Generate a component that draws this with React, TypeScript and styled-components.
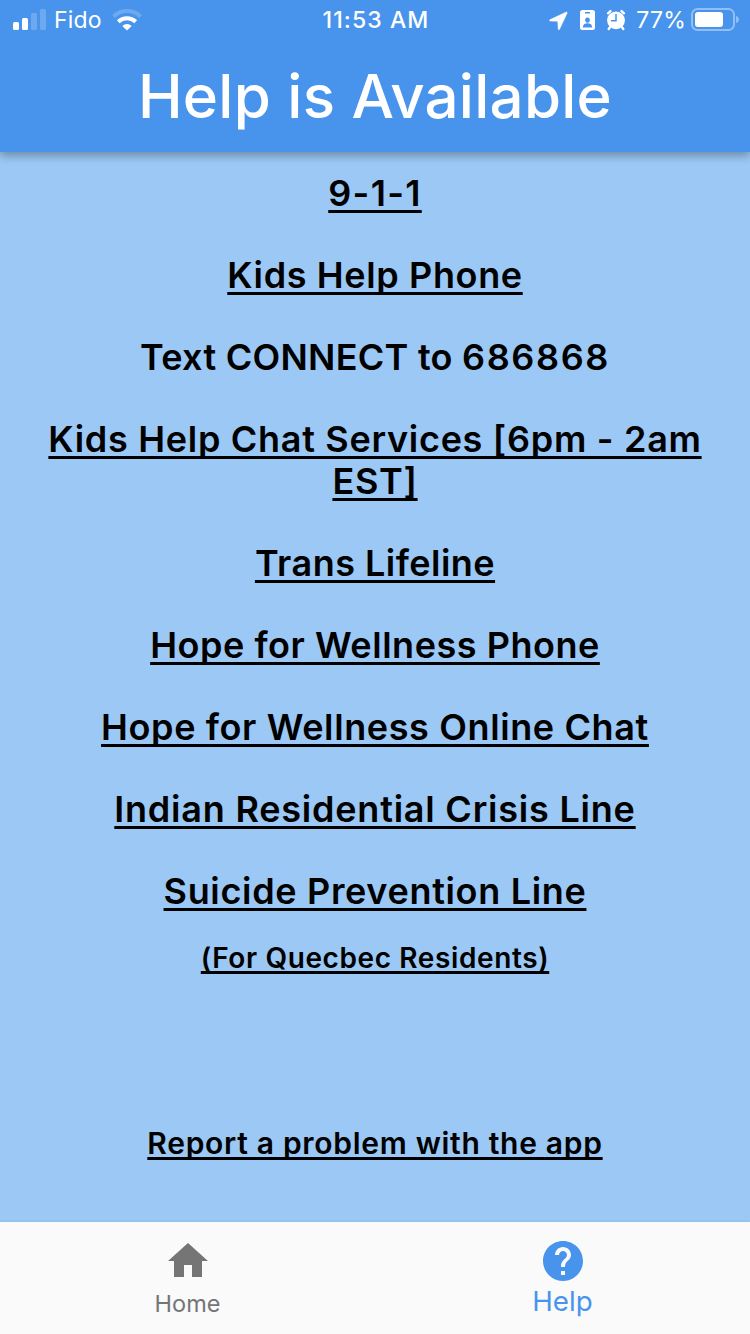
import React from 'react';
import styled, { createGlobalStyle } from 'styled-components';

const Global = createGlobalStyle`
  * { box-sizing: border-box; }
  body { margin: 0; font-family: Inter, "Liberation Sans", sans-serif; background: #9bc8f4; }
`;
const Screen = styled.div`
  width: 750px; height: 1334px; display: flex; flex-direction: column; background: #9bc8f4; overflow: hidden;
`;
const Header = styled.header`
  height: 152px; flex: none; background: #4894ec; color: #fff; z-index: 1;
  box-shadow: 0 4px 8px rgba(0,0,0,.2), 0 1px 12px rgba(0,0,0,.16);
`;
const StatusBar = styled.div`
  height: 40px; padding: 0 11px 0 13px; display: grid; grid-template-columns: 1fr auto 1fr; align-items: center;
  font-size: 23px; line-height: 40px;
  svg { display: block; flex: none; }
`;
const Carrier = styled.div`display: flex; align-items: center; gap: 8px;`;
const Network = styled.span`letter-spacing: .2px; margin-right: 2px;`;
const Clock = styled.div`font-weight: 500; letter-spacing: 1.1px;`;
const Indicators = styled.div`display: flex; align-items: center; justify-content: flex-end;`;
const Percent = styled.span`letter-spacing: .25px; margin: 0 5px 0 10px;`;
const Title = styled.h1`
  margin: 0; height: 112px; line-height: 113px; text-align: center; font-size: 60px; font-weight: 500; letter-spacing: .25px;
`;
const Body = styled.main`
  flex: 1; display: flex; flex-direction: column; align-items: center; padding: 20px 40px 0; text-align: center; color: #000;
`;
const Line = styled.a<{ $size?: number; $plain?: boolean; $top?: number; $track?: number }>`
  font-size: ${p => p.$size ?? 36}px; line-height: 42px; font-weight: 600;
  letter-spacing: ${p => p.$track ?? 0.5}px; margin-top: ${p => p.$top ?? 40}px;
  text-decoration: ${p => (p.$plain ? 'none' : 'underline')};
  text-decoration-thickness: 3px; text-underline-offset: ${p => (p.$size ? 3 : 4)}px; text-decoration-skip-ink: none;
`;
const ShortCode = styled.span`letter-spacing: 1.6px;`;
const TabBar = styled.nav`
  height: 112px; flex: none; display: grid; grid-template-columns: 1fr 1fr; background: #fafafa;
  box-shadow: 0 0 3px rgba(0,0,0,.1);
`;
const Tab = styled.div<{ $active?: boolean }>`
  display: flex; flex-direction: column; align-items: center; padding-top: 15px; gap: ${p => (p.$active ? 0 : 2)}px;
  color: ${p => (p.$active ? '#4894ec' : '#757575')}; font-size: ${p => (p.$active ? 27.7 : 23.5)}px; line-height: ${p => (p.$active ? 33 : 34)}px;
  svg { display: block; }
`;

export default function App() {
  return (
    <Screen>
      <Global />
      <Header>
        <StatusBar>
          <Carrier>
            <svg width="33" height="22" fill="#fff">
              <rect y="13" width="6" height="8" rx="1.5" /><rect x="9" y="9" width="6" height="12" rx="1.5" />
              <rect x="18" y="4" width="6" height="17" rx="1.5" opacity=".2" /><rect x="27" width="6" height="21" rx="1.5" opacity=".2" />
            </svg>
            <Network>Fido</Network>
            <svg width="30" height="22" viewBox="0 0 30 22" fill="none" stroke="#fff" strokeWidth="4">
              <path d="M1.500 7.500a19.500 19.500 0 0 1 27 0" opacity=".2" />
              <path d="M6.300 12.800a12.500 12.500 0 0 1 17.400 0" />
              <path d="M15 21.500l-4.700-4.600a7 7 0 0 1 9.400 0z" fill="#fff" stroke="none" />
            </svg>
          </Carrier>
          <Clock>11:53 AM</Clock>
          <Indicators>
            <svg width="77" height="22" viewBox="550 9 77 22" fill="#fff">
              <path d="M567.300 12L550.800 19.800Q550 20.700 551 21L558.800 21.300L559.200 29.300Q559.700 30.300 560.500 29.300L568.200 13Q568.300 12 567.300 12Z" stroke="#fff" strokeWidth=".5" />
              <path fillRule="evenodd" d="M583.500 10h10a2.500 2.500 0 0 1 2.500 2.500v15a2.500 2.500 0 0 1-2.500 2.500h-10a2.500 2.500 0 0 1-2.500-2.500v-15a2.500 2.500 0 0 1 2.500-2.500zM586 12v1.500h5V12zM588.500 17.500a2.400 2.600 0 1 0 .01 0zM583.800 27.500h9.400c0-2.800-1.800-4.300-4.700-4.300s-4.700 1.500-4.700 4.300z" />
              <circle cx="617" cy="20.300" r="8.900" />
              <path d="M609 13.300l2.500-2.200M625 13.300l-2.500-2.200M611.200 27l-1.500 2M622.800 27l1.500 2" stroke="#fff" strokeWidth="2.400" strokeLinecap="round" />
              <path d="M617 14v6.800h-5" fill="none" stroke="#4894ec" strokeWidth="1.500" />
            </svg>
            <Percent>77%</Percent>
            <svg width="48" height="24" viewBox="0 0 48 24" fill="#fff">
              <rect x="1" y="1" width="42" height="21" rx="5.500" fill="none" stroke="#fff" strokeWidth="2" opacity=".4" />
              <rect x="4" y="4" width="28" height="15" rx="3" />
              <path d="M45 8q3 1 3 3.500t-3 3.500z" opacity=".4" />
            </svg>
          </Indicators>
        </StatusBar>
        <Title>Help is Available</Title>
      </Header>
      <Body>
        <Line $top={0} $track={1.3}>9-1-1</Line>
        <Line $track={0.63}>Kids Help Phone</Line>
        <Line $plain $track={0.27}>Text CONNECT to <ShortCode>686868</ShortCode></Line>
        <Line $track={0.7}>Kids Help Chat Services [6pm - 2am EST]</Line>
        <Line $track={0.47}>Trans Lifeline</Line>
        <Line $track={0.53}>Hope for Wellness Phone</Line>
        <Line $track={0.62}>Hope for Wellness Online Chat</Line>
        <Line $track={0.78}>Indian Residential Crisis Line</Line>
        <Line $track={0.67}>Suicide Prevention Line</Line>
        <Line $size={28} $top={25} $track={0.61}>(For Quecbec Residents)</Line>
        <Line $size={30} $top={143} $track={0.7}>Report a problem with the app</Line>
      </Body>
      <TabBar>
        <Tab><svg width="48" height="48" viewBox="0 0 24 24" fill="currentColor"><path d="M10 20v-6h4v6h5v-8h3L12 3 2 12h3v8z" /></svg>Home</Tab>
        <Tab $active><svg width="48" height="48" viewBox="0 0 24 24" fill="currentColor"><path d="M12 2C6.48 2 2 6.48 2 12s4.48 10 10 10 10-4.48 10-10S17.520 2 12 2zm1 17h-2v-2h2v2zm2.070-7.750l-.9.920C13.450 12.900 13 13.500 13 15h-2v-.5c0-1.100.450-2.100 1.170-2.830l1.240-1.260c.370-.360.590-.860.590-1.410 0-1.100-.9-2-2-2s-2 .9-2 2H8c0-2.210 1.790-4 4-4s4 1.790 4 4c0 .880-.360 1.680-.930 2.250z" /></svg>Help</Tab>
      </TabBar>
    </Screen>
  );
}
